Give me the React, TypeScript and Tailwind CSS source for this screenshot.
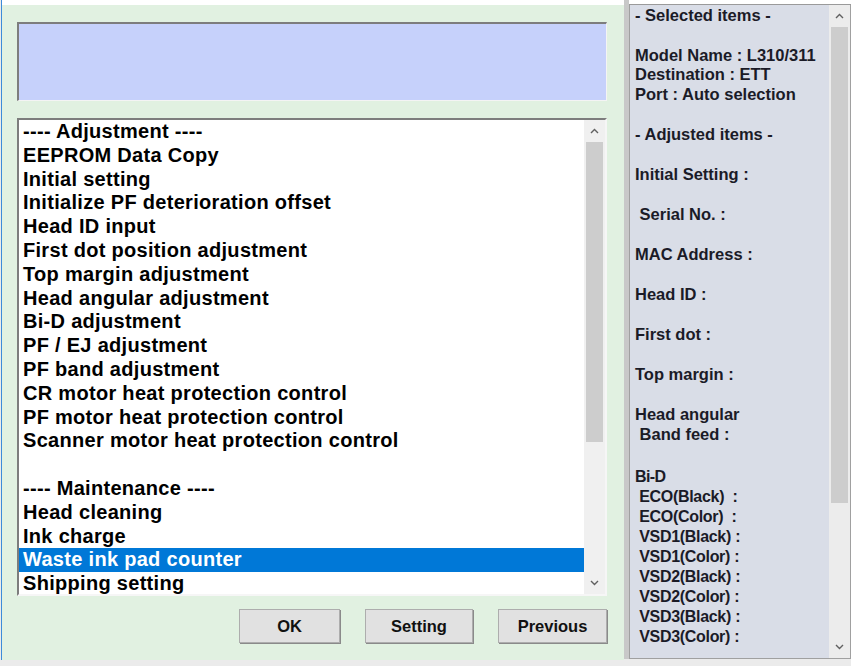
import React from 'react';

const items = [
  '---- Adjustment ----',
  'EEPROM Data Copy',
  'Initial setting',
  'Initialize PF deterioration offset',
  'Head ID input',
  'First dot position adjustment',
  'Top margin adjustment',
  'Head angular adjustment',
  'Bi-D adjustment',
  'PF / EJ adjustment',
  'PF band adjustment',
  'CR motor heat protection control',
  'PF motor heat protection control',
  'Scanner motor heat protection control',
  '',
  '---- Maintenance ----',
  'Head cleaning',
  'Ink charge',
  'Waste ink pad counter',
  'Shipping setting',
];

const bid = [
  ' ECO(Black)  :',
  ' ECO(Color)  :',
  ' VSD1(Black) :',
  ' VSD1(Color) :',
  ' VSD2(Black) :',
  ' VSD2(Color) :',
  ' VSD3(Black) :',
  ' VSD3(Color) :',
];

const Arrow = ({ up }: { up?: boolean }) => (
  <svg width="9" height="6" viewBox="0 0 9 6" className="block">
    <polyline
      points={up ? '1,5 4.5,1.5 8,5' : '1,1 4.5,4.5 8,1'}
      fill="none"
      stroke="#606060"
      strokeWidth="1.4"
    />
  </svg>
);

const Btn = ({ label, w }: { label: string; w: string }) => (
  <button
    className={`${w} h-[34px] bg-[#e1e1e1] border border-[#adadad] shadow-[1px_1px_0_#8a8a8a] text-[16.5px] font-bold text-[#111] flex items-center justify-center`}
  >
    {label}
  </button>
);

export default function App() {
  const selected = 18;
  return (
    <div className="w-[851px] h-[666px] bg-[#ebebeb] flex font-['Liberation_Sans',Arial,sans-serif] overflow-hidden">
      {/* left dialog */}
      <div className="w-[623px] h-[660px] flex flex-col border-l-[1px] border-[#3d8bd9] ml-[1px]">
        <div className="h-[5px] bg-white shrink-0" />
        <div className="flex-1 bg-[#e1f1e1] pl-[15px] pr-[17px] pt-[17px] flex flex-col">
          {/* message box */}
          <div className="h-[79px] bg-[#c6d1fb] border-t-2 border-l-2 border-[#7d7d7d] border-r border-b border-r-[#f4f4f4] border-b-[#f4f4f4]" />

          {/* list box */}
          <div className="mt-[17px] h-[478px] bg-white border-t-2 border-l-2 border-[#7d7d7d] border-r-2 border-b-2 border-r-[#f6f6f6] border-b-[#f6f6f6] flex overflow-hidden">
            <div className="flex-1 overflow-hidden">
              {items.map((t, i) => (
                <div
                  key={i}
                  className={`h-[23.8px] leading-[23.8px] pl-[4px] text-[20px] tracking-[0.3px] font-bold whitespace-nowrap ${
                    i === selected ? 'bg-[#0078d7] text-white' : 'text-black'
                  }`}
                >
                  {t}
                </div>
              ))}
            </div>
            <div className="w-[21px] bg-[#f0f0f0] flex flex-col items-center">
              <div className="h-[22px] flex items-center justify-center">
                <Arrow up />
              </div>
              <div className="w-[17px] h-[300px] bg-[#cdcdcd]" />
              <div className="flex-1" />
              <div className="h-[22px] flex items-center justify-center">
                <Arrow />
              </div>
            </div>
          </div>

          {/* buttons */}
          <div className="mt-[13px] flex justify-end gap-[25px]">
            <Btn label="OK" w="w-[101px]" />
            <Btn label="Setting" w="w-[108px]" />
            <Btn label="Previous" w="w-[109px]" />
          </div>
        </div>
      </div>

      {/* right panel */}
      <div className="flex-1 h-[659px] flex">
        <div className="w-[5px] bg-[#c8c8c8] shrink-0" />
        <div className="flex-1 flex flex-col">
          <div className="h-[5px] bg-white border-b border-[#9a9a9a] shrink-0" />
          <div className="flex-1 flex border-l border-[#9e9e9e] border-b border-[#a0a0a0] border-r">
            <div className="flex-1 bg-[#d9dde7] pl-[5px] pt-[0px] text-[16.5px] font-bold text-[#1b1b27] leading-[20px] whitespace-pre">
              <div>- Selected items -</div>
              <div>&nbsp;</div>
              <div>Model Name : L310/311</div>
              <div className="leading-[19px]">Destination : ETT</div>
              <div>Port : Auto selection</div>
              <div>&nbsp;</div>
              <div>- Adjusted items -</div>
              <div>&nbsp;</div>
              <div>Initial Setting :</div>
              <div>&nbsp;</div>
              <div> Serial No. :</div>
              <div>&nbsp;</div>
              <div>MAC Address :</div>
              <div>&nbsp;</div>
              <div>Head ID :</div>
              <div>&nbsp;</div>
              <div>First dot :</div>
              <div>&nbsp;</div>
              <div>Top margin :</div>
              <div>&nbsp;</div>
              <div>Head angular</div>
              <div> Band feed :</div>
              <div>&nbsp;</div>
              <div className="mt-[3px] text-[16px] tracking-[-0.6px]">Bi-D</div>
              {bid.map((b) => (
                <div key={b} className="text-[16px] tracking-[-0.3px]">
                  {b}
                </div>
              ))}
            </div>
            <div className="w-[21px] bg-[#ececec] flex flex-col items-center">
              <div className="h-[22px] flex items-center justify-center">
                <Arrow up />
              </div>
              <div className="w-[17px] h-[476px] bg-[#cdcdcd]" />
              <div className="flex-1" />
              <div className="h-[22px] flex items-center justify-center">
                <Arrow />
              </div>
            </div>
          </div>
        </div>
      </div>
    </div>
  );
}
